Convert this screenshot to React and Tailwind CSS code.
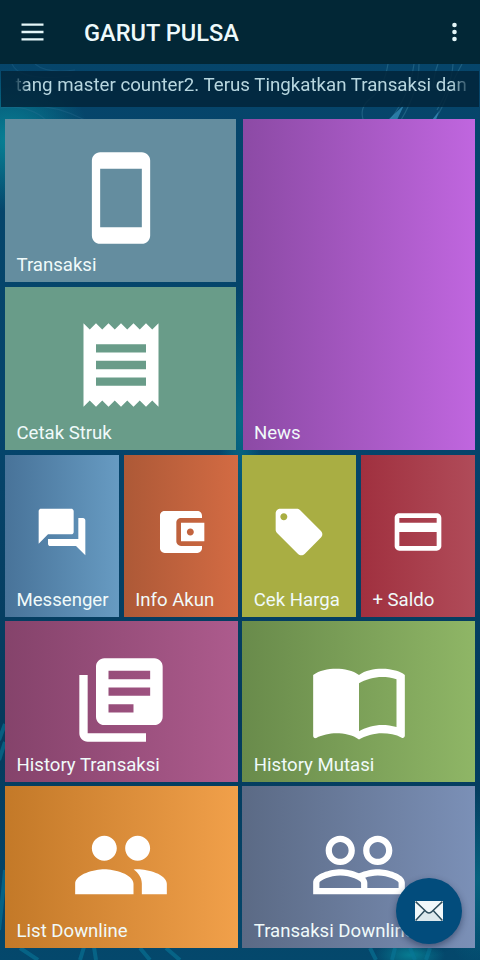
import React from "react";

const ICONS = {
  phone:
    "M17 1.01L7 1c-1.1 0-1.99.9-1.99 2v18c0 1.1.89 2 1.99 2h10c1.1 0 2-.9 2-2V3c0-1.1-.9-1.99-2-1.99zM17 19H7V5h10v14z",
  receipt:
    "M18 17H6v-2h12v2zm0-4H6v-2h12v2zm0-4H6V7h12v2zM3 22l1.5-1.5L6 22l1.5-1.5L9 22l1.5-1.5L12 22l1.5-1.5L15 22l1.5-1.5L18 22l1.5-1.5L21 22V2l-1.5 1.5L18 2l-1.5 1.5L15 2l-1.5 1.5L12 2l-1.5 1.5L9 2 7.5 3.5 6 2 4.5 3.5 3 2v20z",
  forum:
    "M21 6h-2v9H6v2c0 .55.45 1 1 1h11l4 4V7c0-.55-.45-1-1-1zm-4 6V3c0-.55-.45-1-1-1H3c-.55 0-1 .45-1 1v14l4-4h10c.55 0 1-.45 1-1z",
  wallet:
    "M21 18v1c0 1.1-.9 2-2 2H5c-1.11 0-2-.9-2-2V5c0-1.1.89-2 2-2h14c1.1 0 2 .9 2 2v1h-9c-1.11 0-2 .9-2 2v8c0 1.1.89 2 2 2h9zm-9-2h10V8H12v8zm4-2.5c-.83 0-1.5-.67-1.5-1.5s.67-1.5 1.5-1.5 1.5.67 1.5 1.5-.67 1.5-1.5 1.5z",
  tag: "M21.41 11.58l-9-9C12.05 2.22 11.55 2 11 2H4c-1.1 0-2 .9-2 2v7c0 .55.22 1.05.59 1.42l9 9c.36.36.86.58 1.41.58.55 0 1.05-.22 1.41-.59l7-7c.37-.36.59-.86.59-1.41 0-.55-.23-1.06-.59-1.42zM5.5 7C4.67 7 4 6.33 4 5.5S4.67 4 5.5 4 7 4.67 7 5.5 6.33 7 5.5 7z",
  card: "M20 4H4c-1.11 0-1.99.89-1.99 2L2 18c0 1.11.89 2 2 2h16c1.11 0 2-.89 2-2V6c0-1.11-.89-2-2-2zm0 14H4v-6h16v6zm0-10H4V6h16v2z",
  library:
    "M4 6H2v14c0 1.1.9 2 2 2h14v-2H4V6zm16-4H8c-1.1 0-2 .9-2 2v12c0 1.1.9 2 2 2h12c1.1 0 2-.9 2-2V4c0-1.1-.9-2-2-2zm-1 9H9V9h10v2zm-4 4H9v-2h6v2zm4-8H9V5h10v2z",
  book: "M21 5c-1.11-.35-2.33-.5-3.5-.5-1.95 0-4.05.4-5.5 1.5-1.45-1.1-3.55-1.5-5.5-1.5S2.45 4.9 1 6v14.65c0 .25.25.5.5.5.1 0 .15-.05.25-.05C3.1 20.45 5.05 20 6.5 20c1.95 0 4.05.4 5.5 1.5 1.35-.85 3.8-1.5 5.5-1.5 1.65 0 3.35.3 4.75 1.05.1.05.15.05.25.05.25 0 .5-.25.5-.5V6c-.6-.45-1.25-.75-2-1zm0 13.5c-1.1-.35-2.3-.5-3.5-.5-1.7 0-4.15.65-5.5 1.5V8c1.35-.85 3.8-1.5 5.5-1.5 1.2 0 2.4.15 3.5.5v11.5z",
  people:
    "M16 11c1.66 0 2.99-1.34 2.99-3S17.66 5 16 5c-1.66 0-3 1.34-3 3s1.34 3 3 3zm-8 0c1.66 0 2.99-1.34 2.99-3S9.66 5 8 5C6.34 5 5 6.34 5 8s1.34 3 3 3zm0 2c-2.33 0-7 1.17-7 3.5V19h14v-2.5c0-2.33-4.67-3.5-7-3.5zm8 0c-.29 0-.62.02-.97.05 1.16.84 1.97 1.97 1.97 3.45V19h6v-2.5c0-2.33-4.67-3.5-7-3.5z",
  peopleOutline:
    "M16.5 13c-1.2 0-3.07.34-4.5 1-1.43-.67-3.3-1-4.5-1C5.33 13 1 14.08 1 16.25V19h22v-2.75c0-2.17-4.33-3.25-6.5-3.25zm-4 4.5h-10v-1.25c0-.54 2.56-1.75 5-1.75s5 1.21 5 1.75v1.25zm9 0H14v-1.25c0-.46-.2-.86-.52-1.22.88-.3 1.96-.53 3.02-.53 2.44 0 5 1.21 5 1.75v1.25zM7.5 12c1.93 0 3.5-1.57 3.5-3.5S9.43 5 7.5 5 4 6.57 4 8.5 5.57 12 7.5 12zm0-5.5c1.1 0 2 .9 2 2s-.9 2-2 2-2-.9-2-2 .9-2 2-2zm9 5.5c1.93 0 3.5-1.57 3.5-3.5S18.43 5 16.5 5 13 6.57 13 8.5s1.57 3.5 3.5 3.5zm0-5.5c1.1 0 2 .9 2 2s-.9 2-2 2-2-.9-2-2 .9-2 2-2z",
};

function Tile({ icon, label, small, className }) {
  return (
    <button
      className={
        "flex min-w-0 flex-col items-center overflow-hidden text-left " +
        (small ? "pt-[49.500px] " : "pt-[28.500px] ") +
        className
      }
    >
      {icon && (
        <svg
          viewBox="0 0 24 24"
          className={small ? "size-14 shrink-0 fill-white" : "size-[100px] shrink-0 fill-white"}
        >
          <path d={ICONS[icon]} />
        </svg>
      )}
      <span className="mt-auto w-full pb-[5px] pl-[11.5px] text-[18.6px] leading-6 whitespace-nowrap text-[#f0fafa]">
        {label}
      </span>
    </button>
  );
}

function Backdrop() {
  return (
    <svg
      className="absolute inset-0 h-full w-full"
      viewBox="0 0 480 960"
      preserveAspectRatio="none"
      fill="none"
    >
      <defs>
        <linearGradient id="sea" x1="0" y1="0" x2="0" y2="1">
          <stop offset="0" stopColor="#06456a" />
          <stop offset="0.45" stopColor="#05456c" />
          <stop offset="0.75" stopColor="#053a5c" />
          <stop offset="1" stopColor="#04486c" />
        </linearGradient>
        <radialGradient id="glow">
          <stop offset="0" stopColor="#078296" />
          <stop offset="1" stopColor="#078296" stopOpacity="0" />
        </radialGradient>
      </defs>
      <rect width="480" height="960" fill="url(#sea)" />
      <ellipse cx="10" cy="140" rx="80" ry="72" fill="url(#glow)" />
      <ellipse cx="240" cy="420" rx="22" ry="130" fill="url(#glow)" opacity="0.6" />
      <ellipse cx="478" cy="880" rx="40" ry="90" fill="url(#glow)" opacity="0.5" />
      <ellipse cx="410" cy="955" rx="35" ry="16" fill="url(#glow)" opacity="0.9" />
      <g stroke="#36799a" strokeOpacity="0.5" strokeWidth="1.2">
        <path d="M388 64q-4 24-17 34t-7 24M414 64q-4 30-24 56M419 64q0 26-18 56M438 64q-4 10-5 24M462 64q-8 14-16 34t-14 22M453 64q-1 20-16 46" />
        <path d="M0 108q28-4 46 12M25 106q30-2 60 14M12 64q8 18 60 12M35 64q12 10 40 6" strokeOpacity="0.25" />
      </g>
      <path d="M388 120l16-15-7 15zM432 120l7-9-3 9z" fill="#3388b4" opacity="0.8" />
      <g stroke="#087698" strokeWidth="4" opacity="0.6">
        <path d="M-1 930q4-36 6-60M-1 740l6-16M-1 760l6-18M80 960l4-13M96 960l-2-13M180 960l-14-12M150 960l-10-12M20 948l18 12M370 948l6 12M395 948l-3 12M410 948l5 12M430 948l-4 12" />
      </g>
    </svg>
  );
}

function MessageButton() {
  return (
    <button
      className="absolute top-[877.500px] left-[396px] flex size-[66px] items-center justify-center rounded-full bg-[#024c7c] shadow-[0_3px_7px_rgba(10,25,55,0.45)]"
      aria-label="Pesan"
    >
      <svg viewBox="0 0 28 20" className="h-5 w-7">
        <path d="M0 0h28v20H0z" fill="#f1f8fa" />
        <path d="M0 20l9.500-9.500L14 13l4.500-2.500L28 20z" fill="#dce8ec" />
        <path
          d="M.6.600L11.800 11.200Q14 13 16.200 11.200L27.400.600M.6 19.400L9.800 9.600M27.400 19.400L18.200 9.600"
          fill="none"
          stroke="#2c4c5c"
          strokeWidth="1.500"
        />
      </svg>
    </button>
  );
}

export default function App() {
  return (
    <div className="relative h-[960px] w-[480px] overflow-hidden font-['Roboto',sans-serif]">
      <Backdrop />
      <div className="relative flex h-full flex-col">
        <header className="flex h-16 shrink-0 items-center bg-[#022736] pr-[13px] pl-[18px]">
          <button aria-label="Menu">
            <svg viewBox="0 0 28 28" className="size-7" stroke="#e4f6f8" strokeWidth="2.300">
              <path d="M3.500 6.700h22M3.500 14h22M3.500 21.300h22" />
            </svg>
          </button>
          <h1 className="mt-[2px] ml-[38px] text-[23.600px] leading-8 font-medium whitespace-nowrap text-[#eefafb]">
            GARUT PULSA
          </h1>
          <button className="ml-auto" aria-label="Opsi">
            <svg viewBox="0 0 24 28" className="h-7 w-6" fill="#e4f6f8">
              <circle cx="11.500" cy="7" r="2.300" />
              <circle cx="11.500" cy="14" r="2.300" />
              <circle cx="11.500" cy="21" r="2.300" />
            </svg>
          </button>
        </header>

        <div className="mx-px mt-[7px] h-9 shrink-0 bg-[#02253a]/85 px-[13px] pt-px">
          <p className="overflow-hidden mask-[linear-gradient(90deg,transparent,black_14px,black_437px,transparent_458px)] pl-[1.500px] text-[18.700px] leading-[26px] whitespace-nowrap text-[#b7d6df]">
            tang master counter2. Terus Tingkatkan Transaksi dan
          </p>
        </div>

        <main className="mx-[5px] mt-3 flex h-[829px] flex-col gap-[4.500px]">
          <div className="flex h-[331px] shrink-0 gap-[6.500px]">
            <div className="flex w-[231px] flex-col gap-[4.500px]">
              <Tile icon="phone" label="Transaksi" className="flex-1 bg-[#648d9f]" />
              <Tile icon="receipt" label="Cetak Struk" className="flex-1 bg-[#699c89]" />
            </div>
            <Tile label="News" className="flex-1 bg-linear-to-r from-[#8c4aa5] to-[#c066df]" />
          </div>
          <div className="flex h-[162px] shrink-0 gap-[4.500px]">
            <Tile small icon="forum" label="Messenger" className="flex-1 bg-linear-to-r from-[#487399] to-[#679bc2]" />
            <Tile small icon="wallet" label="Info Akun" className="flex-1 bg-linear-to-r from-[#ad5937] to-[#d36b43]" />
            <Tile small icon="tag" label="Cek Harga" className="flex-1 bg-[#a9ae43]" />
            <Tile small icon="card" label="+ Saldo" className="flex-1 bg-linear-to-r from-[#a0303f] to-[#b04b59]" />
          </div>
          <div className="flex h-[160.500px] shrink-0 gap-[4.500px]">
            <Tile icon="library" label="History Transaksi" className="flex-1 bg-linear-to-r from-[#85436b] to-[#ad5b8d]" />
            <Tile icon="book" label="History Mutasi" className="flex-1 bg-linear-to-r from-[#698b4b] to-[#8fb666]" />
          </div>
          <div className="flex h-[161.500px] shrink-0 gap-[4.500px]">
            <Tile icon="people" label="List Downline" className="flex-1 bg-linear-to-r from-[#c37928] to-[#f1a04a]" />
            <Tile icon="peopleOutline" label="Transaksi Downline" className="flex-1 bg-linear-to-r from-[#5b6a85] to-[#7b90b7]" />
          </div>
        </main>
      </div>
      <MessageButton />
    </div>
  );
}
